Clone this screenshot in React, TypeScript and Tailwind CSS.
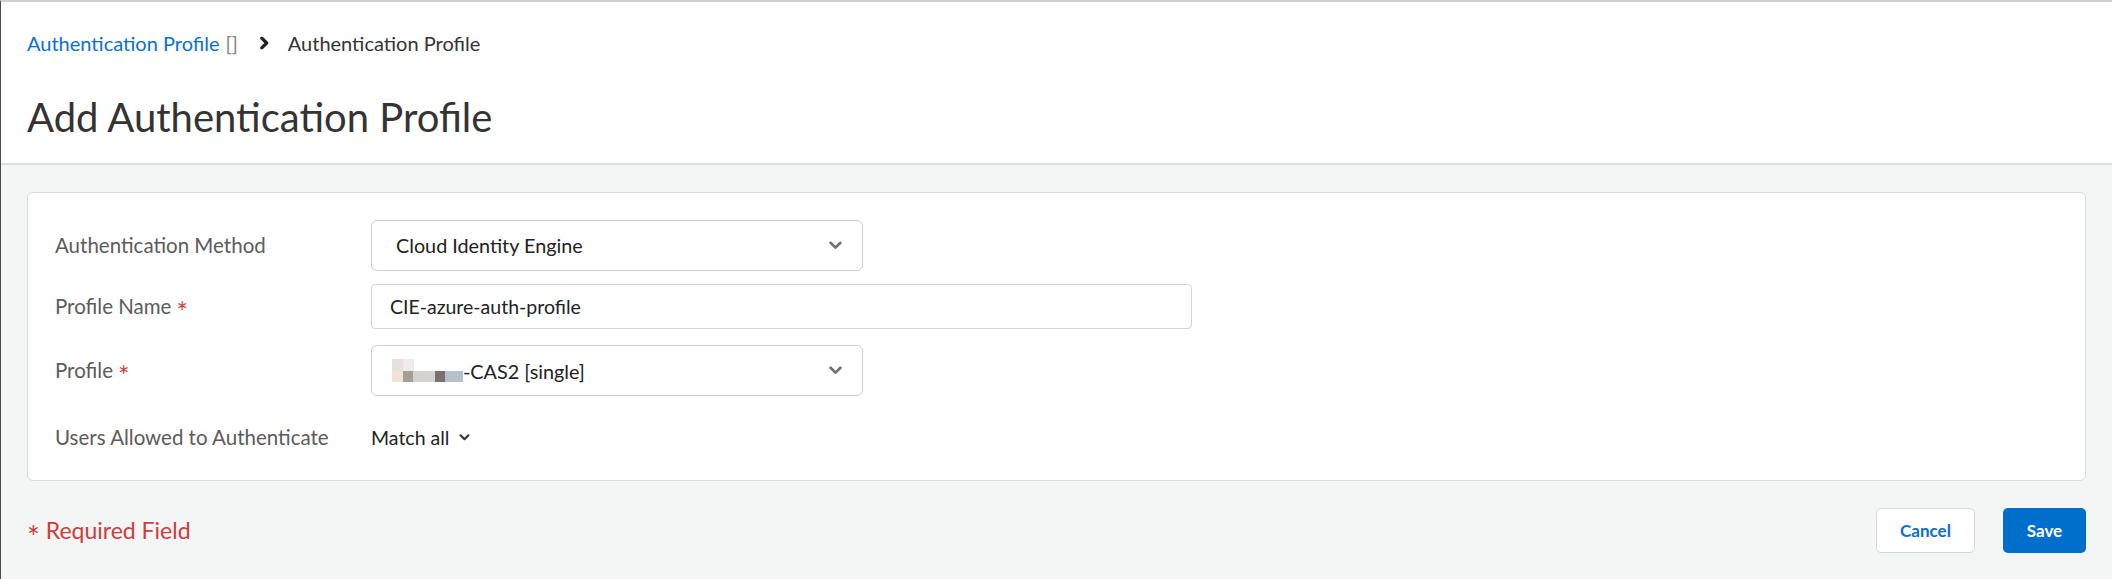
import React from 'react';

const Chevron = ({ className = '', sw = 2.4 }: { className?: string; sw?: number }) => (
  <svg viewBox="0 0 12 8" className={className} fill="none" stroke="currentColor" strokeWidth={sw} strokeLinecap="round" strokeLinejoin="round">
    <path d="M1.5 1.5 6 6l4.5-4.5" />
  </svg>
);

const Star = () => <span className="text-[#d13c3c] ml-[5px] text-[27px] leading-none relative top-[5px]">*</span>;

const Row = ({ label, children, className = '' }: { label: React.ReactNode; children: React.ReactNode; className?: string }) => (
  <div className={`flex items-center ${className}`}>
    <div className="w-[316px] shrink-0 text-[20.5px] text-[#5b5b5b]">{label}</div>
    {children}
  </div>
);

const Redacted = () => (
  <div className="flex flex-col">
    <div className="flex h-[12px]">
      <div className="w-[11px] bg-[#e6e1dc]" />
      <div className="w-[11px] bg-[#ececec]" />
    </div>
    <div className="flex h-[11px]">
      <div className="w-[11px] bg-[#efe3d6]" />
      <div className="w-[10px] bg-[#a49e99]" />
      <div className="w-[11px] bg-[#d4d2ce]" />
      <div className="w-[11px] bg-[#d4d3d1]" />
      <div className="w-[10px] bg-[#79716f]" />
      <div className="w-[18px] bg-[#b5c1c9]" />
    </div>
  </div>
);

export default function App() {
  return (
    <div className="w-[2112px] h-[579px] flex flex-col border-t-2 border-l border-t-[#cfcfcf] border-l-[#4a4a4a] bg-[#f4f5f5] font-['Lato','Noto_Sans',sans-serif] text-[#333]">
      <div className="bg-white border-b-2 border-[#dedede] h-[163px] px-[26px] pt-[27px]">
        <div className="flex items-center text-[20px] leading-[28px]">
          <span className="text-[#0b6fcf]">Authentication Profile</span>
          <span className="ml-[6px] text-[#888]">[]</span>
          <Chevron sw={3} className="w-[13px] h-[10px] ml-[20px] -rotate-90 text-[#222]" />
          <span className="ml-[17px] text-[#333]">Authentication Profile</span>
        </div>
        <h1 className="mt-[36px] text-[40px] leading-[48px] font-normal text-[#333]">Add Authentication Profile</h1>
      </div>

      <div className="px-[26px] pt-[27px]">
        <div className="bg-white border border-[#dcdcdc] rounded-[6px] h-[289px] pl-[27px] pt-[27px]">
          <Row label="Authentication Method">
            <div className="w-[492px] h-[51px] border border-[#cfcfcf] rounded-[6px] flex items-center justify-between pl-[24px] pr-[20px] text-[19.8px] text-[#222]">
              <span>Cloud Identity Engine</span>
              <Chevron className="w-[13px] h-[9px] text-[#707070]" />
            </div>
          </Row>
          <Row label={<span className="flex items-center">Profile Name<Star /></span>} className="mt-[13px]">
            <div className="w-[821px] h-[45px] border border-[#d6d6d6] rounded-[4px] flex items-center pl-[18px] text-[19.5px] text-[#222]">
              CIE-azure-auth-profile
            </div>
          </Row>
          <Row label={<span className="flex items-center">Profile<Star /></span>} className="mt-[16px]">
            <div className="w-[492px] h-[51px] border border-[#cfcfcf] rounded-[6px] flex items-center justify-between pl-[20px] pr-[20px] text-[19.8px] text-[#222]">
              <span className="flex items-end">
                <Redacted />
                <span className="leading-[22px]">-CAS2 [single]</span>
              </span>
              <Chevron className="w-[13px] h-[9px] text-[#707070]" />
            </div>
          </Row>
          <Row label="Users Allowed to Authenticate" className="mt-[26px]">
            <span className="flex items-center text-[19.5px] text-[#222]">
              Match all
              <Chevron className="w-[11px] h-[7px] ml-[10px] text-[#333]" />
            </span>
          </Row>
        </div>

        <div className="flex items-center justify-between mt-[27px]">
          <span className="text-[23px] text-[#d13c3c] flex items-center">
            <span className="text-[30px] leading-none relative top-[5px] mr-[6px]">*</span>
            Required Field
          </span>
          <div className="flex items-center gap-[28px]">
            <button className="w-[99px] h-[45px] bg-white border border-[#d8d8d8] rounded-[5px] text-[17px] font-bold text-[#0b6fcf]">Cancel</button>
            <button className="w-[83px] h-[45px] bg-[#006fcc] rounded-[5px] text-[17px] font-bold text-white">Save</button>
          </div>
        </div>
      </div>
    </div>
  );
}
